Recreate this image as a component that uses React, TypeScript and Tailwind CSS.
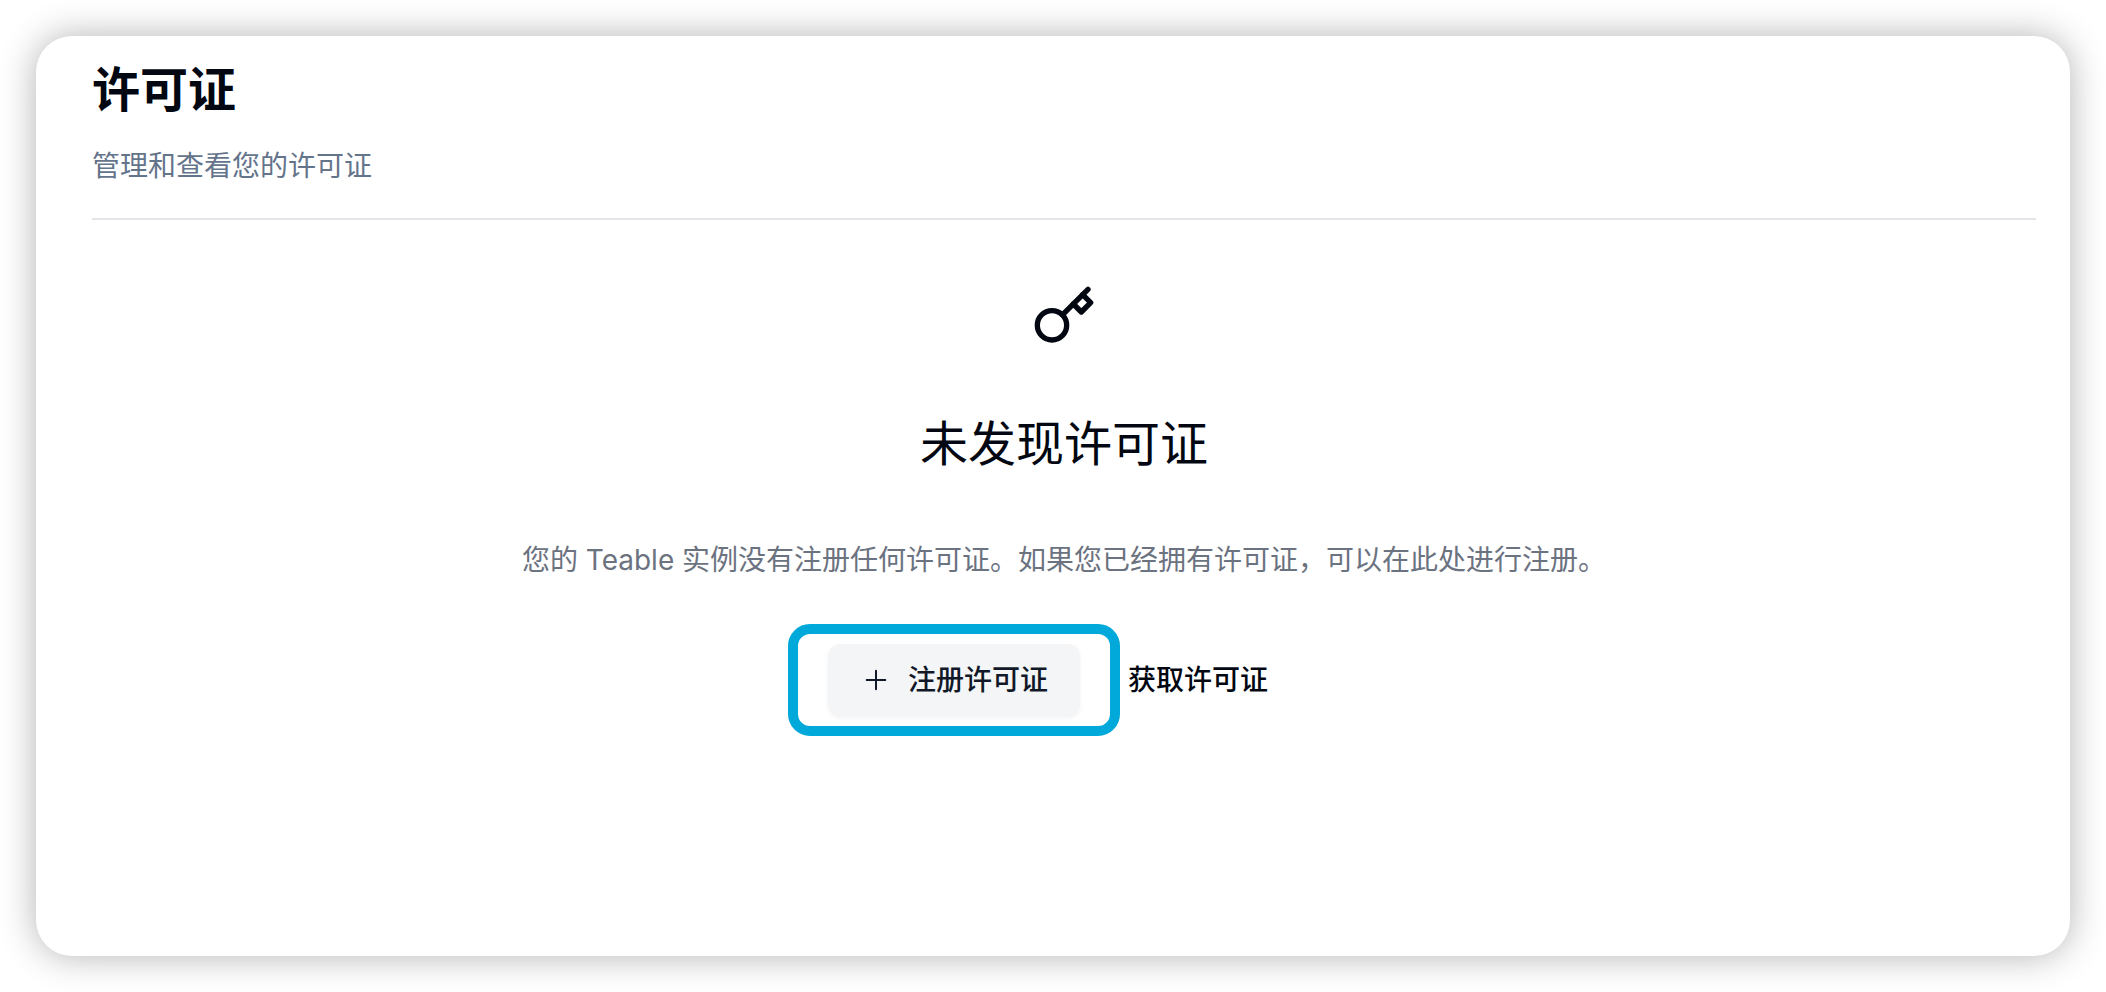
import { Plus } from "lucide-react";

function KeyIcon() {
  return (
    <svg
      viewBox="0 0 24 24"
      fill="none"
      stroke="currentColor"
      strokeWidth="2"
      strokeLinecap="round"
      strokeLinejoin="round"
      className="size-16"
      aria-hidden="true"
    >
      <circle cx="7.5" cy="15.5" r="5.5" />
      <path d="m21 2-9.6 9.6" />
      <path d="m15.5 7.5 3 3L22 7l-3-3" />
    </svg>
  );
}

export default function App() {
  return (
    <div className="flex min-h-screen bg-white p-9 font-['Inter','Noto_Sans_CJK_SC',sans-serif] text-[#020711]">
      <main className="flex grow flex-col rounded-[36px] bg-white pt-[22px] pr-[34px] pb-9 pl-14 shadow-[0_0_36px_rgba(0,0,0,0.3)]">
        <header className="border-b-2 border-[#e4e4e9] pb-8">
          <h1 className="text-5xl leading-[64px] font-semibold">许可证</h1>
          <p className="mt-6 text-[28px] leading-10 text-[#64748b]">管理和查看您的许可证</p>
        </header>

        <section className="flex flex-col items-center pt-16 text-center">
          <KeyIcon />
          <h2 className="mt-16 text-5xl leading-[64px]">未发现许可证</h2>
          <p className="mt-16 text-[28px] leading-10 text-[#6b7280]">
            您的 Teable 实例没有注册任何许可证。如果您已经拥有许可证，可以在此处进行注册。
          </p>
          <div className="mt-16 flex gap-4 text-[28px] font-medium">
            <div className="relative">
              <button
                type="button"
                className="flex h-[72px] items-center gap-4 rounded-xl bg-[#f4f5f7] px-8 text-[#111827] shadow-[0_2px_4px_rgba(0,0,0,0.05)]"
              >
                <Plus className="size-8" strokeWidth={1.5} aria-hidden="true" />
                注册许可证
              </button>
              <span
                aria-hidden="true"
                className="pointer-events-none absolute -inset-x-10 -inset-y-5 rounded-[22px] border-10 border-[#00a9d9]"
              />
            </div>
            <a href="#get-license" className="flex h-[72px] items-center px-8">
              获取许可证
            </a>
          </div>
        </section>
      </main>
    </div>
  );
}
